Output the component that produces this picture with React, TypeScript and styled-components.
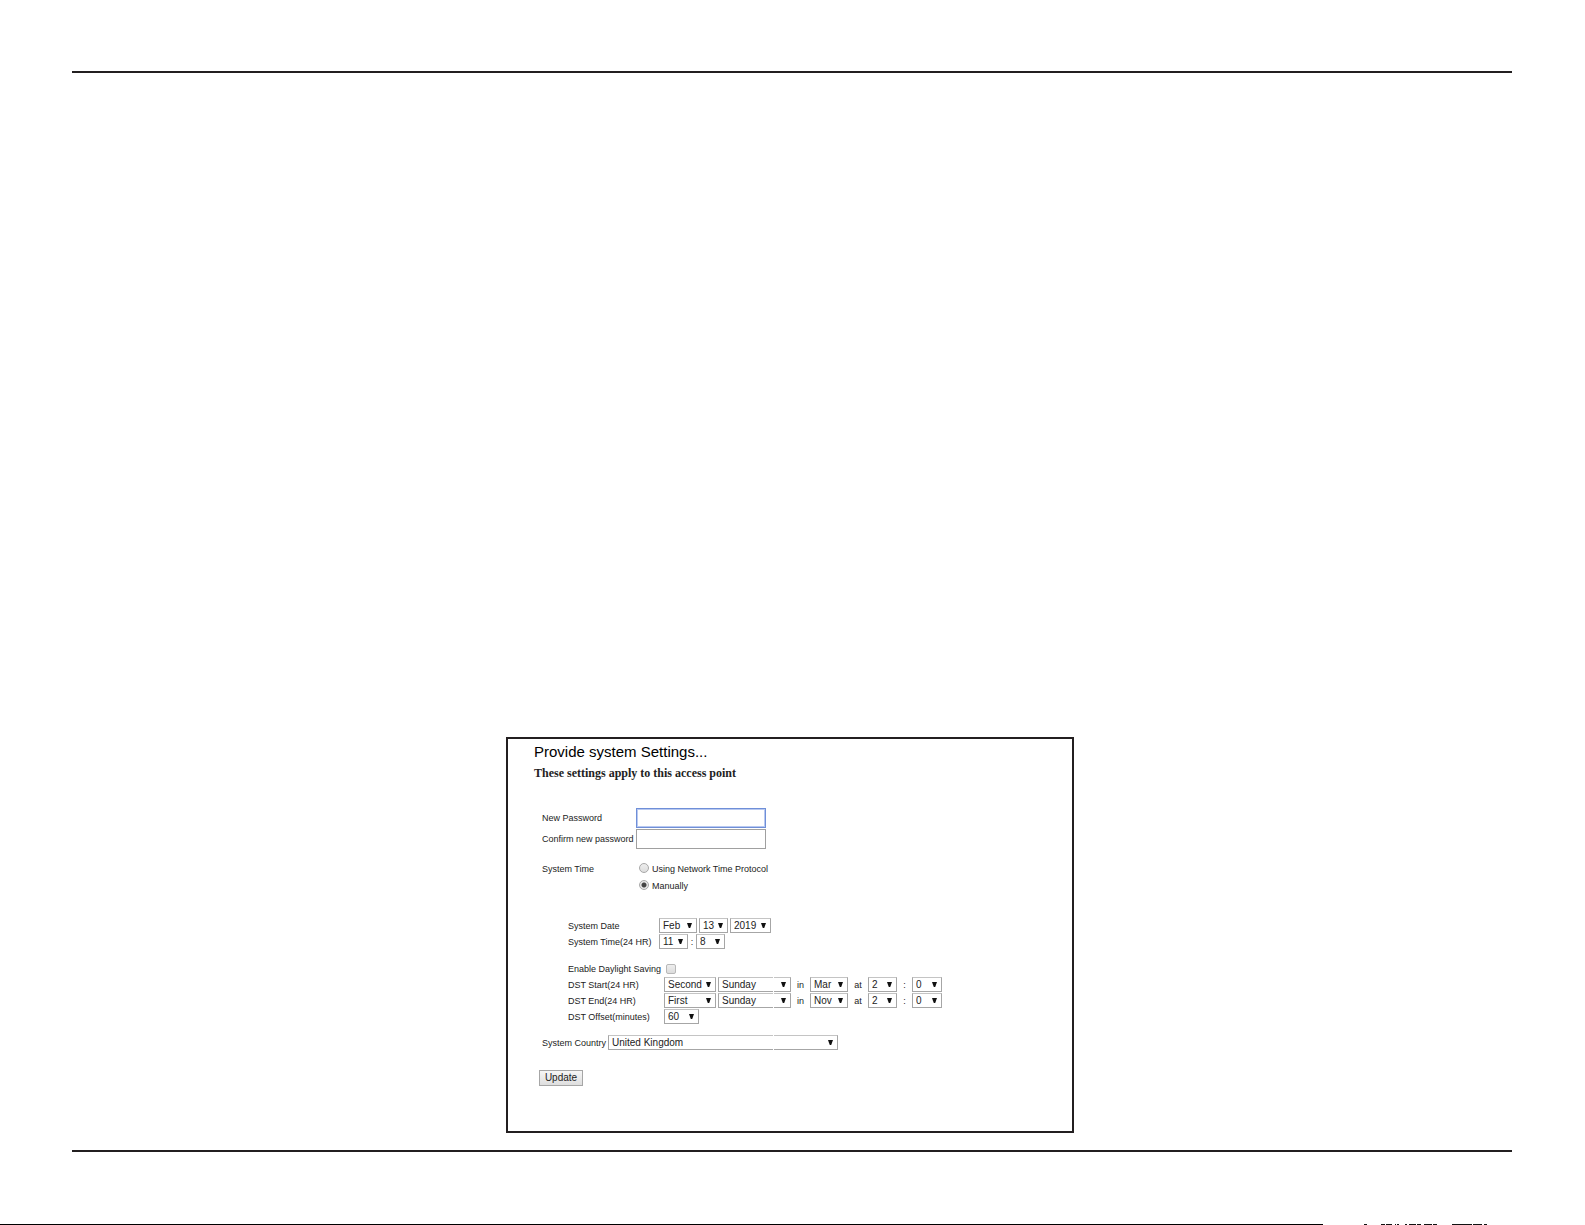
import React from "react";
import styled, { createGlobalStyle } from "styled-components";

const INK = "#231f20";

const GlobalStyle = createGlobalStyle`
  * { box-sizing: border-box; }
  body { margin: 0; background: #fff; font-family: "Liberation Sans", Arial, sans-serif; color: #222; }
`;

const Page = styled.div`
  min-height: 100vh;
  display: flex;
  flex-direction: column;
`;

const Sheet = styled.main`
  flex: 1;
  display: flex;
  flex-direction: column;
  justify-content: flex-end;
  align-items: center;
  margin: 71px 73px 72px 72px;
  padding: 0 4px 17px 0;
  border-top: 2px solid ${INK};
  border-bottom: 2px solid ${INK};
`;

const NextPage = styled.footer`
  display: flex;
  height: 1px;
`;

const NextPageEdge = styled.div`
  flex: 1;
  background: #000;
`;

const Panel = styled.section`
  width: 100%;
  max-width: 568px;
  border: 2px solid ${INK};
  padding: 3px 26px 45px;
`;

const Title = styled.h1`
  margin: 0;
  font-size: 15px;
  line-height: 20px;
  font-weight: 400;
  color: #000;
`;

const Subtitle = styled.h2`
  margin: 3px 0 0;
  font-family: "Liberation Serif", "Times New Roman", serif;
  font-size: 12px;
  line-height: 16px;
  font-weight: 700;
`;

const Form = styled.form`
  margin-top: 27px;
  font-size: 9px;
`;

const Group = styled.div<{ $indent?: boolean; $top?: number }>`
  display: grid;
  row-gap: 1px;
  margin-top: ${(p) => p.$top ?? 0}px;
  padding-left: ${(p) => (p.$indent ? 34 : 8)}px;
`;

const Row = styled.div<{ $height?: number }>`
  display: flex;
  align-items: center;
  height: ${(p) => p.$height ?? 15}px;
  white-space: nowrap;
`;

const Label = styled.label<{ $width: number }>`
  flex: none;
  width: ${(p) => p.$width}px;
`;

const Caption = styled(Label).attrs({ as: "span" })``;

const PasswordInput = styled.input<{ $active?: boolean }>`
  width: 130px;
  height: 20px;
  padding: 1px 3px;
  border: 1px solid ${(p) => (p.$active ? "#6f8fd8" : "#a0a0a0")};
  box-shadow: ${(p) => (p.$active ? "inset 0 0 0 1px #b9c9f0" : "none")};
  outline: none;
  font-size: 10px;
`;

const Radio = styled.input`
  appearance: none;
  width: 10px;
  height: 10px;
  margin: 0 3px 3px;
  border: 1px solid #a8a8a8;
  border-radius: 50%;
  background: linear-gradient(#eee, #ddd);
  &:checked {
    background: radial-gradient(circle, #444 0 2px, #e6e6e6 3px);
  }
`;

const Checkbox = styled.input`
  appearance: none;
  width: 10px;
  height: 10px;
  margin: 0 2px;
  border: 1px solid #b8b8b8;
  border-radius: 2px;
  background: linear-gradient(#eee, #dcdcdc);
`;

const SelectBox = styled.span<{ $width: number; $seam?: number }>`
  position: relative;
  flex: none;
  display: block;
  width: ${(p) => p.$width}px;
  height: 15px;
  & + & { margin-left: 2px; }
  &::after {
    content: "";
    display: ${(p) => (p.$seam ? "block" : "none")};
    position: absolute;
    top: 0;
    bottom: 0;
    left: ${(p) => p.$seam ?? 0}px;
    width: 1px;
    background: #fff;
  }
`;

const Select = styled.select`
  appearance: none;
  display: block;
  width: 100%;
  height: 100%;
  padding: 0 0 0 3px;
  border: 1px solid #a6a6a6;
  border-top-color: #c4c4c4;
  border-radius: 0;
  background: #fff;
  font-family: inherit;
  font-size: 10px;
  color: #222;
`;

const Arrow = styled.svg`
  position: absolute;
  top: 5px;
  right: 5px;
  width: 5px;
  height: 5px;
  pointer-events: none;
`;

const Joiner = styled.span<{ $width: number }>`
  flex: none;
  width: ${(p) => p.$width}px;
  text-align: center;
`;

const UpdateButton = styled.button`
  display: block;
  margin: 20px 0 0 5px;
  width: 44px;
  height: 16px;
  padding: 0;
  border: 1px solid #a6a6a6;
  border-radius: 0;
  background: linear-gradient(#f6f6f6, #dedede);
  font-family: inherit;
  font-size: 10px;
  line-height: 14px;
  color: #222;
`;

type PickProps = { value: string; width: number; name: string; id?: string; seam?: number };

function Pick({ value, width, name, id, seam }: PickProps) {
  return (
    <SelectBox $width={width} $seam={seam}>
      <Select id={id} aria-label={id ? undefined : name} defaultValue={value}>
        <option>{value}</option>
      </Select>
      <Arrow viewBox="0 0 5 5" aria-hidden="true">
        <path d="M0 0H5L3.2 5H1.8Z" fill="#111" />
      </Arrow>
    </SelectBox>
  );
}

type DstProps = { id: string; label: string; week: string; month: string };

function DstRow({ id, label, week, month }: DstProps) {
  return (
    <Row>
      <Label $width={96} htmlFor={id}>{label}</Label>
      <Pick id={id} name={label} value={week} width={52} />
      <Pick name={`${label} day`} value="Sunday" width={73} seam={55} />
      <Joiner $width={19}>in</Joiner>
      <Pick name={`${label} month`} value={month} width={38} />
      <Joiner $width={20}>at</Joiner>
      <Pick name={`${label} hour`} value="2" width={29} />
      <Joiner $width={15}>:</Joiner>
      <Pick name={`${label} minute`} value="0" width={30} />
    </Row>
  );
}

export default function App() {
  return (
    <Page>
      <GlobalStyle />
      <Sheet>
        <Panel>
          <Title>Provide system Settings...</Title>
          <Subtitle>These settings apply to this access point</Subtitle>
          <Form onSubmit={(e) => e.preventDefault()}>
            <Group>
              <Row $height={20}>
                <Label $width={94} htmlFor="password">New Password</Label>
                <PasswordInput id="password" type="password" $active />
              </Row>
              <Row $height={20}>
                <Label $width={94} htmlFor="confirm">Confirm new password</Label>
                <PasswordInput id="confirm" type="password" />
              </Row>
            </Group>
            <Group $top={12}>
              <Row $height={16}>
                <Caption $width={94}>System Time</Caption>
                <Radio id="ntp" type="radio" name="clock" />
                <label htmlFor="ntp">Using Network Time Protocol</label>
              </Row>
              <Row $height={16}>
                <Caption $width={94} />
                <Radio id="manual" type="radio" name="clock" defaultChecked />
                <label htmlFor="manual">Manually</label>
              </Row>
            </Group>
            <Group $indent $top={24}>
              <Row>
                <Label $width={91} htmlFor="date">System Date</Label>
                <Pick id="date" name="Month" value="Feb" width={38} />
                <Pick name="Day" value="13" width={29} />
                <Pick name="Year" value="2019" width={41} />
              </Row>
              <Row>
                <Label $width={91} htmlFor="time">System Time(24 HR)</Label>
                <Pick id="time" name="Hour" value="11" width={29} />
                <Joiner $width={8}>:</Joiner>
                <Pick name="Minute" value="8" width={29} />
              </Row>
            </Group>
            <Group $indent $top={12}>
              <Row>
                <Label $width={96} htmlFor="dst">Enable Daylight Saving</Label>
                <Checkbox id="dst" type="checkbox" />
              </Row>
              <DstRow id="start" label="DST Start(24 HR)" week="Second" month="Mar" />
              <DstRow id="end" label="DST End(24 HR)" week="First" month="Nov" />
              <Row>
                <Label $width={96} htmlFor="offset">DST Offset(minutes)</Label>
                <Pick id="offset" name="Offset" value="60" width={35} />
              </Row>
            </Group>
            <Group $top={11}>
              <Row>
                <Label $width={66} htmlFor="country">System Country</Label>
                <Pick id="country" name="Country" value="United Kingdom" width={230} seam={165} />
              </Row>
            </Group>
            <UpdateButton type="submit">Update</UpdateButton>
          </Form>
        </Panel>
      </Sheet>
      <NextPage>
        <NextPageEdge />
        <svg width="262" height="1" viewBox="0 0 262 1" shapeRendering="crispEdges" aria-hidden="true">
          <path
            d="M41 .5h3M58 .5h4M63 .5h6M72 .5h1M74 .5h2M82 .5h2M86 .5h7M94 .5h4M101 .5h8M110 .5h4M129 .5h20M150 .5h9M161 .5h3"
            stroke="#111"
          />
        </svg>
      </NextPage>
    </Page>
  );
}
